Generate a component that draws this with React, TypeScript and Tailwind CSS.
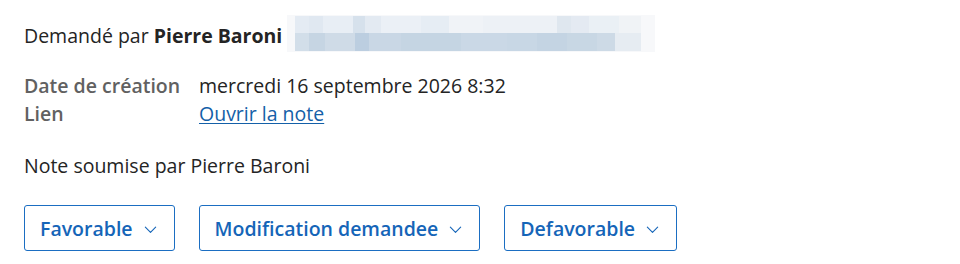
import React from 'react';

// Petit chevron des boutons de vote
const Chevron = () => (
  <svg width="15" height="15" viewBox="0 0 16 16" fill="none" className="ml-[10px] mt-[2px]">
    <path d="M2.5 5.5l5.5 5.5 5.5-5.5" stroke="currentColor" strokeWidth="1.2" strokeLinecap="round" strokeLinejoin="round" />
  </svg>
);

const VoteButton = ({ label }: { label: string }) => (
  <button className="h-[46px] pl-[15px] pr-[16px] flex items-center border-[1.5px] border-[#1b6ec2] rounded-[3px] bg-white text-[#1565b8] text-[19.5px] font-semibold">
    {label}
    <Chevron />
  </button>
);

// Zone floutée à côté du nom (adresse masquée)
const Blurred = () => (
  <div className="flex flex-col justify-center h-[37px] w-[368px] -mt-[7px] bg-[#f7f8fa]">
    <div className="flex h-[17px] ml-[8px] mr-[14px]">
      <div className="w-[14px] bg-[#e4ebf3]" />
      <div className="w-[14px] bg-[#e0e8f1]" />
      <div className="w-[30px] bg-[#e8eef5]" />
      <div className="w-[12px] bg-[#d6e1ec]" />
      <div className="w-[16px] bg-[#e3eaf2]" />
      <div className="w-[40px] bg-[#ebf0f6]" />
      <div className="w-[28px] bg-[#e6edf4]" />
      <div className="w-[34px] bg-[#f0f3f7]" />
      <div className="w-[74px] bg-[#edf1f6]" />
      <div className="w-[14px] bg-[#dfe7ef]" />
      <div className="w-[18px] bg-[#e4eaf2]" />
      <div className="w-[30px] bg-[#eaf0f5]" />
      <div className="flex-1 bg-[#f0f3f6]" />
    </div>
    <div className="flex h-[18px] ml-[8px] mr-[14px]">
      <div className="w-[14px] bg-[#d2dee9]" />
      <div className="w-[16px] bg-[#c6d5e3]" />
      <div className="w-[30px] bg-[#cfdbe7]" />
      <div className="w-[14px] bg-[#bccee0]" />
      <div className="w-[32px] bg-[#c9d7e5]" />
      <div className="w-[60px] bg-[#c5d5e3]" />
      <div className="w-[46px] bg-[#cad8e6]" />
      <div className="w-[30px] bg-[#c8d7e5]" />
      <div className="w-[30px] bg-[#c4d4e3]" />
      <div className="w-[30px] bg-[#c8d7e4]" />
      <div className="w-[18px] bg-[#cddae6]" />
      <div className="flex-1 bg-[#e6ecf2]" />
    </div>
  </div>
);

export default function App() {
  return (
    <div className="w-[960px] h-[264px] bg-white px-6 pt-[22px] font-['Open_Sans',sans-serif] text-[19.5px] leading-[27px] text-[#242424]">
      <div className="flex items-start gap-[5px]">
        <span>
          Demandé par <span className="font-bold">Pierre Baroni</span>
        </span>
        <Blurred />
      </div>

      <div className="mt-[20px] grid grid-cols-[175px_auto] leading-[28px] w-max">
        <span className="font-semibold text-[#616161]">Date de création</span>
        <span>mercredi 16 septembre 2026 8:32</span>
        <span className="font-semibold text-[#616161]">Lien</span>
        <a href="#" className="text-[#1460a8] underline underline-offset-2">Ouvrir la note</a>
      </div>

      <p className="mt-[24px]">Note soumise par Pierre Baroni</p>

      <div className="mt-[26px] flex gap-6">
        <VoteButton label="Favorable" />
        <VoteButton label="Modification demandee" />
        <VoteButton label="Defavorable" />
      </div>
    </div>
  );
}
